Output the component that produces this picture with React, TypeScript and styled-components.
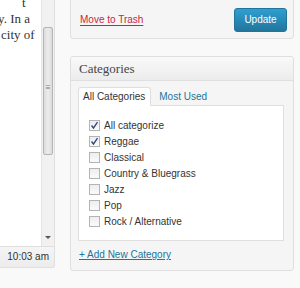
import React from 'react'
import styled, { createGlobalStyle } from 'styled-components'

const GlobalStyle = createGlobalStyle`
  html, body {
    margin: 0;
    padding: 0;
    background: #f9f9f9;
    overflow: hidden;
    font-family: 'Liberation Sans', Arial, sans-serif;
  }
`

const categories = [
  { name: 'All categorize', checked: true },
  { name: 'Reggae', checked: true },
  { name: 'Classical', checked: false },
  { name: 'Country & Bluegrass', checked: false },
  { name: 'Jazz', checked: false },
  { name: 'Pop', checked: false },
  { name: 'Rock / Alternative', checked: false },
]

const lines = [
  { text: 't', indent: 22 },
  { text: 'y. In a', indent: -2 },
  { text: 'city of', indent: 1 },
]

const App: React.FC = () => {
  return (
    <Page>
      <GlobalStyle />
      <EditorColumn>
        <Editor>
          <EditorText>
            {lines.map((l) => (
              <TextLine key={l.text} indent={l.indent}>
                {l.text}
              </TextLine>
            ))}
          </EditorText>
          <Scrollbar>
            <Thumb>
              <Grip>≡</Grip>
            </Thumb>
            <ArrowDown />
          </Scrollbar>
        </Editor>
        <StatusBar>10:03 am</StatusBar>
      </EditorColumn>

      <Sidebar>
        <PublishBox>
          <TrashLink>Move to Trash</TrashLink>
          <UpdateButton>Update</UpdateButton>
        </PublishBox>

        <PostBox>
          <BoxHeader>Categories</BoxHeader>
          <BoxInside>
            <Tabs>
              <Tab active>All Categories</Tab>
              <Tab active={false}>Most Used</Tab>
            </Tabs>
            <TabPanel>
              {categories.map((c) => (
                <CategoryRow key={c.name}>
                  <CheckBox>
                    {c.checked && (
                      <svg width='9' height='9' viewBox='0 0 9 9'>
                        <path d='M1.5 4.5 L3.5 7 L7.5 1.2' fill='none' stroke='#3b4a7b' strokeWidth='1.4' />
                      </svg>
                    )}
                  </CheckBox>
                  {c.name}
                </CategoryRow>
              ))}
            </TabPanel>
            <AddLink>+ Add New Category</AddLink>
          </BoxInside>
        </PostBox>

        <PostBox>
          <BoxHeader />
        </PostBox>
      </Sidebar>
    </Page>
  )
}

const Page = styled.div`
  display: flex;
  align-items: flex-start;
  gap: 15px;
  width: 300px;
  height: 288px;
  overflow: hidden;
`

const EditorColumn = styled.div`
  display: flex;
  flex-direction: column;
  width: 55px;
  flex-shrink: 0;
`

const Editor = styled.div`
  display: flex;
  height: 247px;
  background: #fff;
  border-right: 1px solid #dfdfdf;
  border-bottom: 1px solid #dfdfdf;
  box-sizing: border-box;
`

const EditorText = styled.div`
  flex: 1;
  overflow: hidden;
  font-family: 'Liberation Serif', 'Times New Roman', serif;
  font-size: 13px;
  line-height: 16px;
  color: #333;
  margin-top: -5px;
`

interface TextLineProps {
  indent: number
}

const TextLine = styled.div<TextLineProps>`
  white-space: nowrap;
  margin-left: ${(p) => p.indent}px;
`

const Scrollbar = styled.div`
  position: relative;
  width: 13px;
  background: #f1f1f1;
  border-left: 1px solid #e4e4e4;
  box-sizing: border-box;
`

const Thumb = styled.div`
  margin-top: 27px;
  height: 128px;
  margin-left: 1px;
  width: 10px;
  background: linear-gradient(to right, #dcdcdc, #ececec 50%, #dadada);
  border: 1px solid #b5b5b5;
  border-radius: 2px;
  box-sizing: border-box;
  display: flex;
  align-items: center;
  justify-content: center;
`

const Grip = styled.span`
  font-size: 8px;
  color: #777;
  line-height: 1;
  margin-top: -6px;
`

const ArrowDown = styled.div`
  position: absolute;
  left: 3px;
  bottom: 7px;
  width: 0;
  height: 0;
  border-left: 3px solid transparent;
  border-right: 3px solid transparent;
  border-top: 3px solid #555;
`

const StatusBar = styled.div`
  height: 21px;
  background: linear-gradient(#f5f5f5, #ececec);
  border-right: 1px solid #dfdfdf;
  border-bottom: 1px solid #dfdfdf;
  border-bottom-right-radius: 3px;
  box-sizing: border-box;
  font-size: 10px;
  color: #333;
  text-align: right;
  padding-right: 5px;
  line-height: 20px;
`

const Sidebar = styled.div`
  display: flex;
  flex-direction: column;
  gap: 17px;
  width: 224px;
  margin-top: -10px;
`

const BoxBase = styled.div`
  background: #f5f5f5;
  border: 1px solid #dfdfdf;
  border-radius: 3px;
  box-sizing: border-box;
`

const PublishBox = styled(BoxBase)`
  display: flex;
  align-items: center;
  justify-content: space-between;
  height: 49px;
  padding: 10px 6px 0 9px;
`

const TrashLink = styled.a`
  color: #c8283f;
  font-size: 10px;
  text-decoration: underline;
  text-underline-offset: 2px;
  cursor: pointer;
`

const UpdateButton = styled.button`
  width: 53px;
  height: 24px;
  border: 1px solid #21759b;
  border-radius: 3px;
  background: linear-gradient(#2e9fd2, #21759b);
  color: #fff;
  font-family: 'Liberation Sans', Arial, sans-serif;
  font-size: 10px;
  padding: 0;
`

const PostBox = styled(BoxBase)`
  overflow: hidden;
  flex-shrink: 0;
`

const BoxHeader = styled.div`
  height: 24px;
  box-sizing: border-box;
  background: linear-gradient(#f9f9f9, #ececec);
  border-bottom: 1px solid #dfdfdf;
  font-family: 'Liberation Serif', Georgia, serif;
  font-size: 13px;
  color: #464646;
  padding-left: 8px;
  line-height: 23px;
`

const BoxInside = styled.div`
  padding: 6px 9px 9px 7px;
`

const Tabs = styled.div`
  display: flex;
  gap: 3px;
  margin-bottom: -1px;
  position: relative;
`

interface TabProps {
  active: boolean
}

const Tab = styled.div<TabProps>`
  height: 18px;
  line-height: 18px;
  padding: 0 5px 0 4px;
  font-size: 10px;
  color: ${(p) => (p.active ? '#333' : '#21759b')};
  background: ${(p) => (p.active ? '#fff' : 'transparent')};
  border: 1px solid ${(p) => (p.active ? '#dfdfdf' : 'transparent')};
  border-bottom: none;
  border-radius: 3px 3px 0 0;
`

const TabPanel = styled.div`
  background: #fff;
  border: 1px solid #dfdfdf;
  padding: 11px 10px 11px 10px;
  display: flex;
  flex-direction: column;
`

const CategoryRow = styled.label`
  display: flex;
  align-items: center;
  gap: 4px;
  height: 16px;
  font-size: 10px;
  color: #333;
`

const CheckBox = styled.span`
  width: 9px;
  height: 9px;
  border: 1px solid #b4b4b4;
  background: linear-gradient(#eee, #fafafa);
  display: flex;
  align-items: center;
  justify-content: center;
  flex-shrink: 0;
`

const AddLink = styled.a`
  display: block;
  margin-top: 8px;
  margin-left: 1px;
  font-size: 10px;
  color: #21759b;
  text-decoration: underline;
  line-height: 12px;
`

export default App
